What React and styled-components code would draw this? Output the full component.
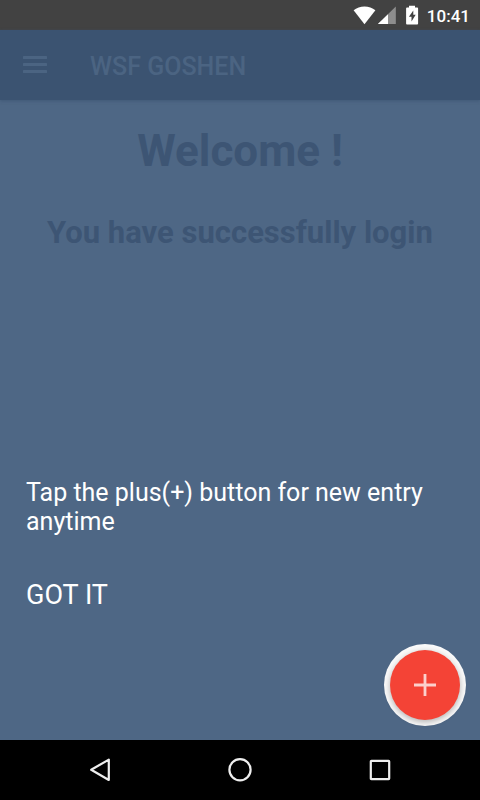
import React, { useState } from "react";
import styled, { createGlobalStyle, ThemeProvider } from "styled-components";

const theme = {
  colors: {
    status: "#424242",
    bar: "#3b5371",
    overlay: "#4e6785",
    dimLight: "#4b6482",
    dimDark: "#3d5574",
    white: "#ffffff",
    red: "#f44336",
    nav: "#000000",
  },
};

const App = () => {
  const [showHint, setShowHint] = useState(true);

  return (
    <ThemeProvider theme={theme}>
      <GlobalStyle />
      <Screen>
        <StatusBar>
          <StatusIcons />
          <Clock>10:41</Clock>
        </StatusBar>
        <AppBar>
          <MenuButton type="button" aria-label="Menu">
            <svg width="24" height="18" viewBox="0 0 24 18" fill="currentColor">
              <rect width="24" height="3" rx="0.5" />
              <rect y="7" width="24" height="3" rx="0.5" />
              <rect y="14" width="24" height="3" rx="0.5" />
            </svg>
          </MenuButton>
          <Title>WSF GOSHEN</Title>
        </AppBar>
        <Content>
          <Welcome>Welcome !</Welcome>
          <LoginText>You have successfully login</LoginText>
          <Hint $visible={showHint}>
            <HintText>Tap the plus(+) button for new entry anytime</HintText>
            <GotIt type="button" onClick={() => setShowHint(false)}>
              GOT IT
            </GotIt>
          </Hint>
          <FabRing>
            <Fab type="button" aria-label="New entry">
              <svg width="22" height="22" viewBox="0 0 22 22">
                <path d="M11 0v22M0 11h22" stroke="#fcd0cc" strokeWidth="2.8" />
              </svg>
            </Fab>
          </FabRing>
        </Content>
        <NavBar>
          <NavButton type="button" aria-label="Back">
            <svg width="24" height="24" viewBox="0 0 24 24">
              <path d="M20.8 1.6v20.4L3.2 11.8z" />
            </svg>
          </NavButton>
          <NavButton type="button" aria-label="Home">
            <svg width="24" height="24" viewBox="0 0 24 24">
              <circle cx="12" cy="11.8" r="10.6" />
            </svg>
          </NavButton>
          <NavButton type="button" aria-label="Recent apps">
            <svg width="24" height="24" viewBox="0 0 24 24">
              <rect x="2.8" y="2.8" width="18.4" height="18.4" rx="0.6" />
            </svg>
          </NavButton>
        </NavBar>
      </Screen>
    </ThemeProvider>
  );
};

// wifi, signal and charging battery
const StatusIcons = () => (
  <svg width="66" height="20" viewBox="0 0 66 20" fill="#fff">
    <path d="M11.5 19.2L0.6 5.2C3.6 2.9 7.4 1.4 11.5 1.4s7.9 1.5 10.9 3.8z" />
    <path d="M42.8 1.4v17.6H24.9z" opacity="0.4" />
    <path d="M35 9.2V19H24.9z" />
    <path
      fillRule="evenodd"
      d="M56 0.8h6v1.8h2.2q0.9 0 0.9 0.9v15q0 0.9-0.9 0.9H54q-0.9 0-0.9-0.9v-15q0-0.9 0.9-0.9h2zM60.3 5.4L55.9 11.8h2.6v4.8l4.2-6.8h-2.4z"
    />
  </svg>
);

const GlobalStyle = createGlobalStyle`
  * {
    box-sizing: border-box;
  }
  body {
    margin: 0;
    font-family: Roboto, "Noto Sans", sans-serif;
  }
  button {
    padding: 0;
    border: none;
    background: none;
    font-family: inherit;
    cursor: pointer;
  }
  svg {
    display: block;
  }
`;

const Screen = styled.div`
  display: flex;
  flex-direction: column;
  min-height: 100vh;
  background-color: ${({ theme }) => theme.colors.overlay};
`;

const StatusBar = styled.div`
  display: flex;
  align-items: center;
  justify-content: flex-end;
  gap: 8px;
  height: 30px;
  padding: 0 10px;
  background-color: ${({ theme }) => theme.colors.status};
`;

const Clock = styled.span`
  color: ${({ theme }) => theme.colors.white};
  font-size: 17px;
  font-weight: 500;
  line-height: 20px;
  padding-top: 2px;
`;

const AppBar = styled.header`
  display: flex;
  align-items: center;
  gap: 31px;
  height: 70px;
  padding: 0 11px;
  background-color: ${({ theme }) => theme.colors.bar};
  box-shadow: 0 1px 3px rgba(58, 82, 112, 0.7);
`;

const MenuButton = styled.button`
  display: flex;
  align-items: center;
  justify-content: center;
  width: 48px;
  height: 48px;
  color: ${({ theme }) => theme.colors.dimLight};
`;

const Title = styled.h1`
  margin: 0;
  padding-top: 4px;
  color: ${({ theme }) => theme.colors.dimLight};
  font-size: 25px;
  font-weight: 500;
  line-height: 30px;
`;

const Content = styled.main`
  flex: 1;
  display: flex;
  flex-direction: column;
  padding: 24px 14px 14px;
`;

const Welcome = styled.h2`
  margin: 0 0 28px;
  color: ${({ theme }) => theme.colors.dimDark};
  font-size: 44px;
  font-weight: 700;
  line-height: 54px;
  text-align: center;
`;

const LoginText = styled.h3`
  margin: 0;
  color: ${({ theme }) => theme.colors.dimDark};
  font-size: 31px;
  font-weight: 700;
  line-height: 54px;
  text-align: center;
`;

const Hint = styled.section`
  margin-top: auto;
  padding: 0 12px;
  color: ${({ theme }) => theme.colors.white};
  visibility: ${({ $visible }) => ($visible ? "visible" : "hidden")};
`;

const HintText = styled.p`
  margin: 0 0 42px;
  font-size: 25px;
  line-height: 29px;
`;

const GotIt = styled.button`
  display: block;
  margin-bottom: 32px;
  color: inherit;
  font-size: 27px;
  line-height: 34px;
`;

const FabRing = styled.div`
  align-self: flex-end;
  display: flex;
  align-items: center;
  justify-content: center;
  width: 82px;
  height: 82px;
  border-radius: 50%;
  background-color: #fafafa;
`;

const Fab = styled.button`
  display: flex;
  align-items: center;
  justify-content: center;
  width: 70px;
  height: 70px;
  border-radius: 50%;
  background-color: ${({ theme }) => theme.colors.red};
  box-shadow: 0 2px 6px rgba(0, 0, 0, 0.3);
`;

const NavBar = styled.nav`
  display: grid;
  grid-template-columns: repeat(3, 1fr);
  height: 60px;
  padding: 0 30px;
  background-color: ${({ theme }) => theme.colors.nav};
`;

const NavButton = styled.button`
  display: flex;
  align-items: center;
  justify-content: center;

  svg {
    fill: none;
    stroke: #eeeeee;
    stroke-width: 2.2;
    stroke-linejoin: round;
  }
`;

export default App;
